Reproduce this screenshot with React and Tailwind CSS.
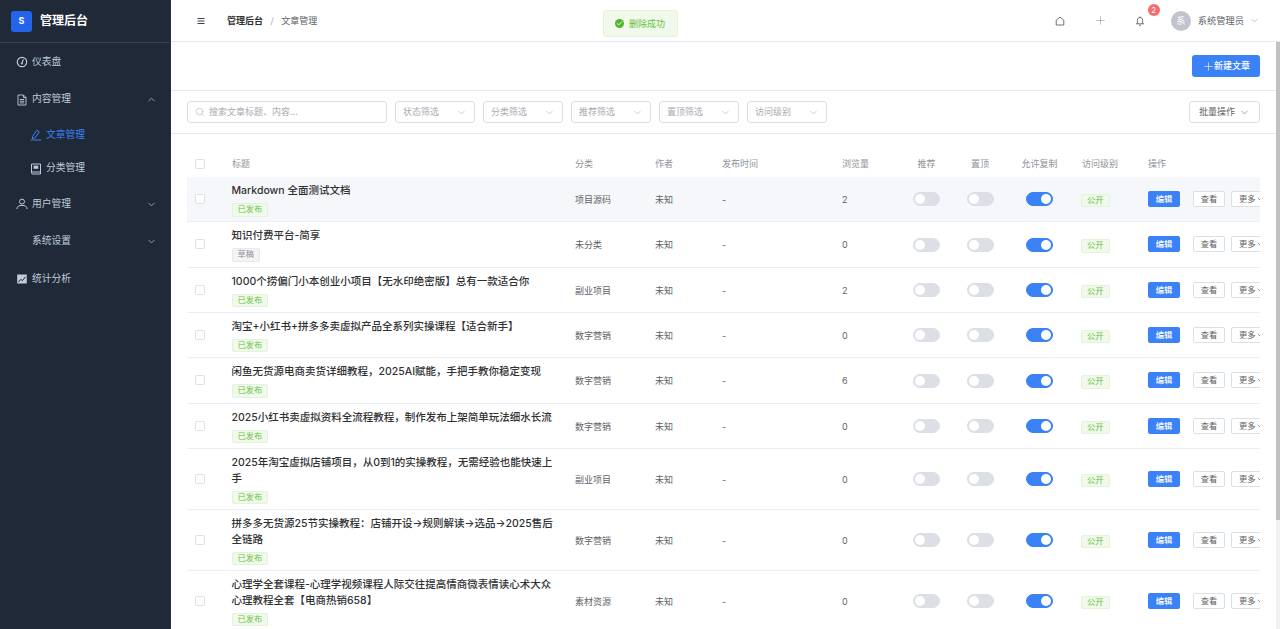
import React from 'react';
import { ChevronDown, ChevronUp, Plus, Search, Check } from 'lucide-react';

const rows = [
    { title: 'Markdown 全面测试文档', status: '已发布', cat: '项目源码', views: 2, hover: true },
    { title: '知识付费平台-简享', status: '草稿', cat: '未分类', views: 0 },
    { title: '1000个捞偏门小本创业小项目【无水印绝密版】总有一款适合你', status: '已发布', cat: '副业项目', views: 2 },
    { title: '淘宝+小红书+拼多多卖虚拟产品全系列实操课程【适合新手】', status: '已发布', cat: '数字营销', views: 0 },
    { title: '闲鱼无货源电商卖货详细教程，2025AI赋能，手把手教你稳定变现', status: '已发布', cat: '数字营销', views: 6 },
    { title: '2025小红书卖虚拟资料全流程教程，制作发布上架简单玩法细水长流', status: '已发布', cat: '数字营销', views: 0 },
    { title: '2025年淘宝虚拟店铺项目，从0到1的实操教程，无需经验也能快速上手', status: '已发布', cat: '副业项目', views: 0 },
    { title: '拼多多无货源25节实操教程：店铺开设→规则解读→选品→2025售后全链路', status: '已发布', cat: '数字营销', views: 0 },
    { title: '心理学全套课程-心理学视频课程人际交往提高情商微表情读心术大众心理教程全套【电商热销658】', status: '已发布', cat: '素材资源', views: 0 },
];

const filters = ['状态筛选', '分类筛选', '推荐筛选', '置顶筛选', '访问级别'];

const Odometer = () => (
    <svg width="12" height="12" viewBox="0 0 12 12" fill="none" stroke="currentColor">
        <circle cx="6" cy="6" r="4.7" strokeWidth="1.2" />
        <path d="M7.4 3.4 L6 7" strokeWidth="1.2" />
        <circle cx="5.8" cy="7.4" r="1" fill="currentColor" stroke="none" />
    </svg>
);

const DocIcon = () => (
    <svg width="12" height="12" viewBox="0 0 12 12" fill="none" stroke="currentColor" strokeWidth="0.9">
        <path d="M2 1 H7.5 L10 3.5 V11 H2 Z M7.5 1 V3.5 H10" />
        <path d="M3.8 5.5 H8.2 M3.8 7.2 H8.2 M3.8 8.9 H8.2" />
    </svg>
);

const PenIcon = () => (
    <svg width="12" height="12" viewBox="0 0 12 12" fill="none" stroke="currentColor" strokeWidth="1">
        <path d="M2.6 7.2 L7 1.2 L9.3 2.9 L4.9 8.9 L2.4 9.6 Z" />
        <path d="M0.6 11 H11" />
    </svg>
);

const BookIcon = () => (
    <svg width="12" height="12" viewBox="0 0 12 12" fill="none" stroke="currentColor" strokeWidth="1">
        <path d="M1.5 1 H10.5 V11 H2.8 Q1.5 11 1.5 9.7 Z" />
        <path d="M1.5 9 H10.5" />
        <rect x="3.6" y="2.6" width="4.6" height="3.2" fill="currentColor" stroke="none" />
    </svg>
);

const UserIcon = () => (
    <svg width="12" height="12" viewBox="0 0 12 12" fill="none" stroke="currentColor" strokeWidth="1">
        <circle cx="6" cy="3.6" r="2.5" />
        <path d="M1 11 C1 8.3 3 7.4 6 7.4 C9 7.4 11 8.3 11 11" />
    </svg>
);

const TrendIcon = () => (
    <svg width="12" height="12" viewBox="0 0 12 12">
        <rect x="1.2" y="1.5" width="9.6" height="9" fill="currentColor" />
        <path d="M2.4 9 L4.8 6.4 L6.4 7.6 L9.6 3.8" fill="none" stroke="#1f2937" strokeWidth="1" />
    </svg>
);

const HomeIcon = () => (
    <svg width="10" height="10" viewBox="0 0 10 10" fill="none" stroke="currentColor" strokeWidth="0.9">
        <path d="M1.2 9 V4.2 L5 1 L8.8 4.2 V9 Z" />
    </svg>
);

const BellIcon = () => (
    <svg width="10" height="10" viewBox="0 0 10 10" fill="none" stroke="currentColor" strokeWidth="0.9">
        <path d="M2.4 7.6 V4.2 C2.4 2.6 3.5 1.5 5 1.5 C6.5 1.5 7.6 2.6 7.6 4.2 V7.6" />
        <path d="M1 7.8 H9 M5 0.4 V1.5 M4 9.2 H6" />
    </svg>
);

const MenuIcon = () => (
    <svg width="8" height="8" viewBox="0 0 8 8" fill="none" stroke="currentColor" strokeWidth="1">
        <path d="M0.5 1.5 H7.5 M0.5 4 H7.5 M0.5 6.5 H7.5" />
    </svg>
);

const NavItem = ({ icon, label, arrow, active, sub }) => (
    <div className={`flex items-center ${sub ? 'h-[33.5px] pl-[29px]' : 'h-[37.5px] pl-[15px]'} pr-[13px] text-[9.75px] ${active ? 'text-[#3b82f6]' : 'text-[#bfcbd9]'}`}>
        <span className="w-[13px] flex justify-center">{icon}</span>
        <span className="ml-[4px]">{label}</span>
        {arrow === 'up' && <ChevronUp size={11} strokeWidth={1.5} className="ml-auto" />}
        {arrow === 'down' && <ChevronDown size={11} strokeWidth={1.5} className="ml-auto" />}
    </div>
);

const Toggle = ({ on }) => (
    <div className={`inline-flex align-middle w-[27px] h-[14px] rounded-full p-[1px] border ${on ? 'bg-[#3b82f6] border-[#3b82f6] justify-end' : 'bg-[#dcdfe6] border-[#dcdfe6]'}`}>
        <div className="w-[10px] h-[10px] rounded-full bg-white" />
    </div>
);

const Checkbox = () => <div className="w-[10px] h-[10px] rounded-[1.5px] border border-[#dcdfe6] bg-white" />;

const Select = ({ label }) => (
    <div className="w-[80px] h-[22px] flex items-center justify-between pl-[7px] pr-[7px] border border-[#dcdfe6] rounded-[3px] text-[9px] text-[#a8abb2]">
        {label}
        <ChevronDown size={11} strokeWidth={1.3} />
    </div>
);

export default function App() {
    return (
        <div className="flex h-screen overflow-hidden bg-white font-['Inter','Noto_Sans_CJK_SC',sans-serif]">
            {/* Sidebar */}
            <aside className="w-[171px] shrink-0 bg-[#1f2937] border-r border-[#334155]/40">
                <div className="h-[43px] flex items-center pl-[11px] border-b border-[#334155]">
                    <div className="w-[21px] h-[21px] rounded-[3px] bg-[#2563eb] text-white text-[9px] font-bold flex items-center justify-center">S</div>
                    <span className="ml-[8px] text-[12px] font-semibold text-white">管理后台</span>
                </div>
                <nav className="mt-[0.5px]">
                    <NavItem icon={<Odometer />} label="仪表盘" />
                    <NavItem icon={<DocIcon />} label="内容管理" arrow="up" />
                    <NavItem sub active icon={<PenIcon />} label="文章管理" />
                    <NavItem sub icon={<BookIcon />} label="分类管理" />
                    <NavItem icon={<UserIcon />} label="用户管理" arrow="down" />
                    <NavItem icon={null} label="系统设置" arrow="down" />
                    <NavItem icon={<TrendIcon />} label="统计分析" />
                </nav>
            </aside>

            <div className="flex-1 min-w-0 flex flex-col relative">
                {/* Header */}
                <header className="h-[42px] shrink-0 flex items-center border-b border-[#e5e7eb] pl-[26px] pr-[20px] text-[#606266]">
                    <span className="text-[#374151]"><MenuIcon /></span>
                    <span className="ml-[22px] text-[9px] font-semibold text-[#303133]">管理后台</span>
                    <span className="mx-[7.5px] text-[9px] text-[#a8abb2]">/</span>
                    <span className="text-[9px] text-[#606266]">文章管理</span>
                    <div className="ml-auto flex items-center">
                        <HomeIcon />
                        <Plus size={13} strokeWidth={1.1} className="ml-[29px] text-[#909399]" />
                        <div className="relative ml-[28px]">
                            <BellIcon />
                            <span className="absolute -top-[12px] left-[13px] w-[12px] h-[12px] rounded-full bg-[#f56c6c] text-white text-[8px] flex items-center justify-center">2</span>
                        </div>
                        <div className="ml-[26px] w-[20px] h-[20px] rounded-full bg-[#c0c4cc] text-white text-[9px] flex items-center justify-center">系</div>
                        <span className="ml-[7px] text-[9.25px]">系统管理员</span>
                        <ChevronDown size={11} strokeWidth={1.2} className="ml-[5px] text-[#909399]" />
                    </div>
                </header>

                {/* Toast */}
                <div className="absolute top-[10px] left-[432px] w-[75px] h-[27px] flex items-center pl-[11px] bg-[#f0f9eb] border border-[#e1f3d8] rounded-[3px] text-[#67c23a] text-[9px]">
                    <span className="w-[9px] h-[9px] rounded-full bg-[#52b52a] flex items-center justify-center">
                        <Check size={7} strokeWidth={3} className="text-white" />
                    </span>
                    <span className="ml-[5px]">删除成功</span>
                </div>

                {/* Toolbar */}
                <div className="h-[49px] shrink-0 flex items-center justify-end pr-[20px] border-b border-[#e5e7eb]">
                    <button className="w-[68px] h-[22px] rounded-[3px] bg-[#3b82f6] text-white text-[9px] font-medium flex items-center justify-center">
                        <Plus size={13} strokeWidth={1.1} className="-mr-[1px]" />新建文章
                    </button>
                </div>

                {/* Filters */}
                <div className="h-[43px] shrink-0 flex items-center pl-[16px] pr-[20px] border-b border-[#e5e7eb]">
                    <div className="w-[200px] h-[22px] flex items-center px-[7px] border border-[#dcdfe6] rounded-[3px] text-[9px] text-[#a8abb2]">
                        <Search size={10} strokeWidth={1.3} />
                        <span className="ml-[4px]">搜索文章标题、内容...</span>
                    </div>
                    <div className="ml-[8px] flex gap-[8px]">
                        {filters.map((f) => <Select key={f} label={f} />)}
                    </div>
                    <button className="ml-auto w-[71px] h-[22px] flex items-center justify-center gap-[4px] border border-[#dcdfe6] rounded-[3px] text-[9px] text-[#606266]">
                        批量操作<ChevronDown size={11} strokeWidth={1.3} />
                    </button>
                </div>

                {/* Table */}
                <div className="flex-1 min-h-0 overflow-hidden pt-[18px] pl-[16px] pr-[20px]">
                    <div className="overflow-hidden">
                        <table className="w-[1100px] table-fixed border-collapse text-[9px] text-[#606266]">
                            <colgroup>
                                <col className="w-[36px]" />
                                <col className="w-[343px]" />
                                <col className="w-[80px]" />
                                <col className="w-[67px]" />
                                <col className="w-[120px]" />
                                <col className="w-[66px]" />
                                <col className="w-[55px]" />
                                <col className="w-[52px]" />
                                <col className="w-[67px]" />
                                <col className="w-[66px]" />
                                <col className="w-[148px]" />
                            </colgroup>
                            <thead>
                                <tr className="h-[25px] text-[#909399] text-left">
                                    <th className="pl-[8px] pb-[2px] font-normal"><Checkbox /></th>
                                    <th className="pl-[9px] pb-[2px] font-normal">标题</th>
                                    <th className="pl-[9px] pb-[2px] font-normal">分类</th>
                                    <th className="pl-[9px] pb-[2px] font-normal">作者</th>
                                    <th className="pl-[9px] pb-[2px] font-normal">发布时间</th>
                                    <th className="pl-[9px] pb-[2px] font-normal">浏览量</th>
                                    <th className="pb-[2px] font-normal text-center">推荐</th>
                                    <th className="pb-[2px] font-normal text-center">置顶</th>
                                    <th className="pb-[2px] font-normal text-center">允许复制</th>
                                    <th className="pl-[9px] pb-[2px] font-normal">访问级别</th>
                                    <th className="pl-[9px] pb-[2px] font-normal">操作</th>
                                </tr>
                            </thead>
                            <tbody>
                                {rows.map((r) => (
                                    <tr key={r.title} className={`border-b border-[#ebeef5] ${r.hover ? 'bg-[#f5f7fa]' : ''}`}>
                                        <td className="pl-[8px]"><Checkbox /></td>
                                        <td className="pl-[8.5px] pr-[9px] pt-[6px] pb-[4.83px]">
                                            <div className="text-[10.5px] leading-[15.75px] font-medium text-[#303133]">{r.title}</div>
                                            <div className={`mt-[4.25px] w-fit h-[13.5px] leading-[11.5px] px-[5px] rounded-[2px] border text-[8.25px] ${r.status === '草稿' ? 'bg-[#f4f4f5] border-[#e9e9eb] text-[#909399]' : 'bg-[#f0f9eb] border-[#e1f3d8] text-[#67c23a]'}`}>{r.status}</div>
                                        </td>
                                        <td className="pl-[9px] pt-[1px]">{r.cat}</td>
                                        <td className="pl-[9px] pt-[1px]">未知</td>
                                        <td className="pl-[9px] pt-[1px]">-</td>
                                        <td className="pl-[9px] pt-[1px]">{r.views}</td>
                                        <td className="text-center"><Toggle /></td>
                                        <td className="text-center"><Toggle /></td>
                                        <td className="text-center"><Toggle on /></td>
                                        <td className="pl-[8px] pt-[3px]">
                                            <div className="w-fit h-[13.5px] leading-[11.5px] px-[5px] rounded-[2px] border bg-[#f0f9eb] border-[#e1f3d8] text-[#67c23a] text-[8.25px]">公开</div>
                                        </td>
                                        <td className="pl-[9px]">
                                            <div className="flex items-center text-[8.25px]">
                                                <button className="w-[32px] h-[16px] rounded-[2px] bg-[#3b82f6] text-white font-medium">编辑</button>
                                                <button className="ml-[13px] w-[32px] h-[16px] rounded-[2px] border border-[#dcdfe6] bg-white">查看</button>
                                                <button className="ml-[6px] w-[39px] h-[16px] rounded-[2px] border border-[#dcdfe6] bg-white flex items-center pl-[7px]">更多<ChevronDown size={8} /></button>
                                            </div>
                                        </td>
                                    </tr>
                                ))}
                            </tbody>
                        </table>
                    </div>
                </div>

                {/* Scrollbar */}
                <div className="absolute top-[42px] bottom-0 right-0 w-[4px] bg-[#f1f1f1]">
                    <div className="h-[478px] bg-[#c1c1c1]" />
                </div>
            </div>
        </div>
    );
}
